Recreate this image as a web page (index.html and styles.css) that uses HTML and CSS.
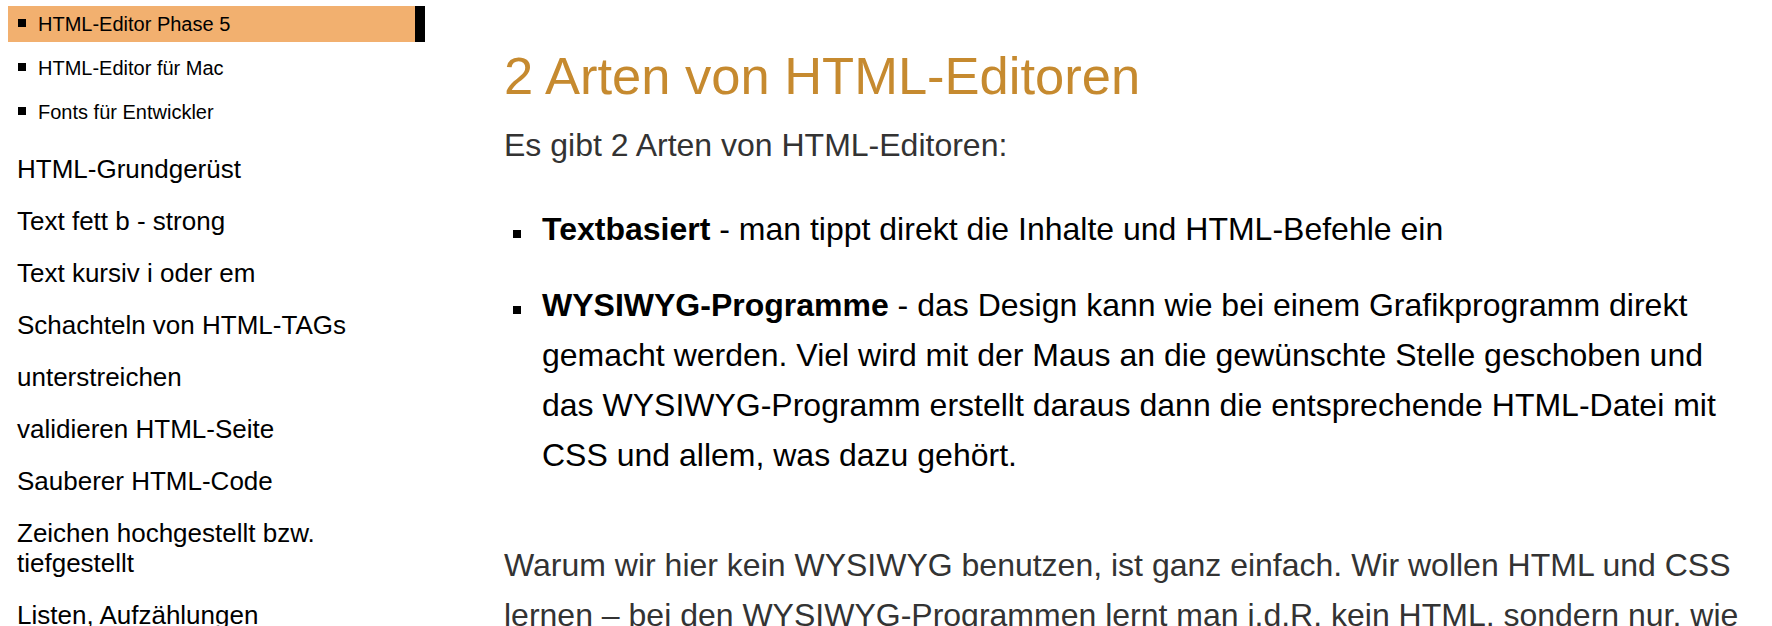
FILE: index.html
```html
<!DOCTYPE html>
<html lang="de">
<head>
<meta charset="utf-8">
<title>2 Arten von HTML-Editoren</title>
<link rel="stylesheet" href="styles.css">
</head>
<body>
<div class="page">
  <nav class="sidebar">
    <ul class="sub">
      <li class="active"><span class="txt">HTML-Editor Phase 5</span></li>
      <li><span class="txt">HTML-Editor für Mac</span></li>
      <li><span class="txt">Fonts für Entwickler</span></li>
    </ul>
    <ul class="mainnav">
      <li>HTML-Grundgerüst</li>
      <li>Text fett b - strong</li>
      <li>Text kursiv i oder em</li>
      <li>Schachteln von HTML-TAGs</li>
      <li>unterstreichen</li>
      <li>validieren HTML-Seite</li>
      <li>Sauberer HTML-Code</li>
      <li>Zeichen hochgestellt bzw. tiefgestellt</li>
      <li>Listen, Aufzählungen</li>
    </ul>
  </nav>
  <main class="content">
    <h1 class="title">2 Arten von HTML-Editoren</h1>
    <p class="intro">Es gibt 2 Arten von HTML-Editoren:</p>
    <ul class="types">
      <li><span class="txt"><strong>Textbasiert</strong> - man tippt direkt die Inhalte und HTML-Befehle ein</span></li>
      <li><span class="txt"><strong>WYSIWYG-Programme</strong> - das Design kann wie bei einem Grafikprogramm direkt gemacht werden. Viel wird mit der Maus an die gewünschte Stelle geschoben und das WYSIWYG-Programm erstellt daraus dann die entsprechende HTML-Datei mit CSS und allem, was dazu gehört.</span></li>
    </ul>
    <p class="why">Warum wir hier kein WYSIWYG benutzen, ist ganz einfach. Wir wollen HTML und CSS lernen – bei den WYSIWYG-Programmen lernt man i.d.R. kein HTML, sondern nur, wie man das WYSIWYG-Programm bedient.</p>
  </main>
</div>
</body>
</html>
```

FILE: styles.css
```css
html, body {
  margin: 0;
  padding: 0;
  background: #ffffff;
}

body {
  font-family: "Liberation Sans", Arial, Helvetica, sans-serif;
  color: #000;
  overflow: hidden;
}

.page {
  display: flex;
  align-items: flex-start;
}

.sidebar {
  flex: 0 0 417px;
  margin-left: 8px;
  padding-top: 6px;
}

.sidebar ul {
  list-style: none;
  margin: 0;
  padding: 0;
}

.sub li {
  display: flex;
  align-items: center;
  height: 36px;
  line-height: 36px;
  font-size: 20px;
  padding-left: 10px;
  margin-bottom: 8px;
}

.sub li::before {
  content: "";
  flex: 0 0 8px;
  height: 8px;
  margin-top: -2px;
  margin-right: 12px;
  background: #000;
}

.sub li.active {
  background: #f2b06f;
  border-right: 10px solid #000;
}

.sidebar .mainnav {
  margin-top: 24px;
}

.mainnav li {
  font-size: 26px;
  line-height: 30px;
  padding-left: 9px;
  padding-right: 60px;
  margin-bottom: 22px;
}

.content {
  flex: 1 1 auto;
  padding-left: 79px;
  padding-right: 20px;
}

.title {
  margin: 46px 0 0;
  font-size: 52.5px;
  line-height: 60px;
  font-weight: normal;
  color: #c68a2f;
}

.intro {
  margin: 14px 0 0;
  font-size: 32px;
  line-height: 50px;
  color: #333333;
}

.types {
  list-style: none;
  margin: 34px 0 0;
  padding: 0;
}

.types li {
  display: flex;
  font-size: 32px;
  line-height: 50px;
  color: #000;
}

.types li + li {
  margin-top: 26px;
}

.types li::before {
  content: "";
  flex: 0 0 8px;
  height: 8px;
  margin-top: 26px;
  margin-left: 9px;
  margin-right: 21px;
  background: #000;
}

.types strong {
  font-weight: bold;
}

.why {
  margin: 60px 0 0;
  font-size: 32px;
  line-height: 50px;
  color: #333333;
}
```
